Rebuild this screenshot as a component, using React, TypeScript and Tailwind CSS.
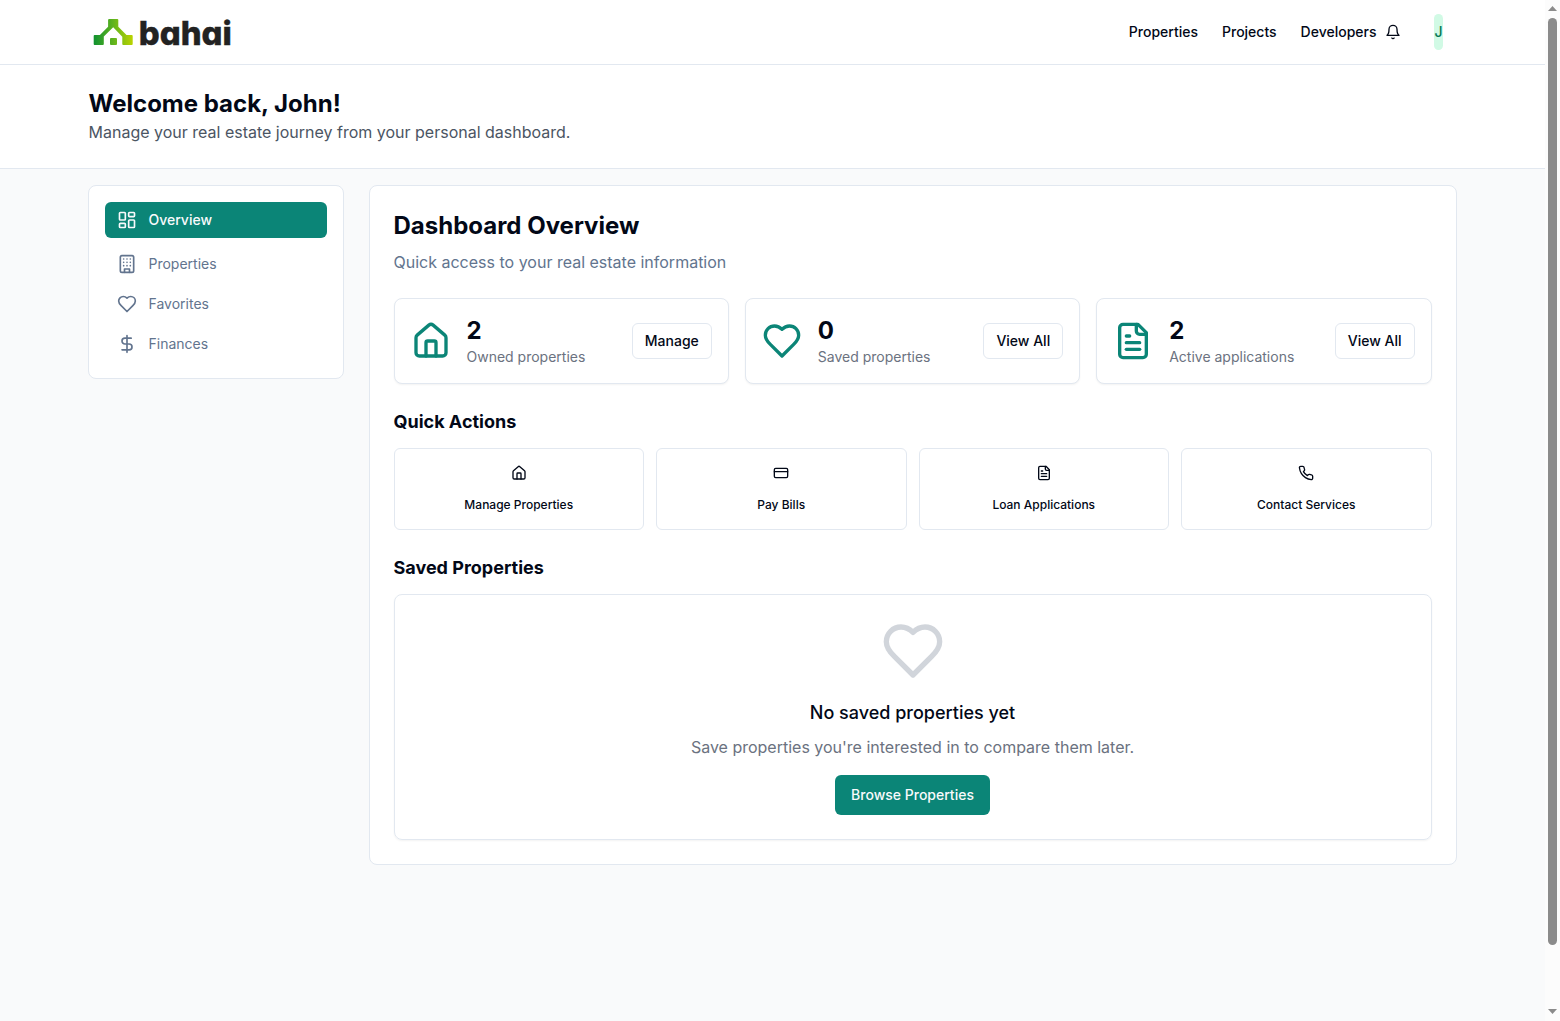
import type { ReactNode } from "react";

function Icon({ className, children }: { className: string; children: ReactNode }) {
  return (
    <svg
      viewBox="0 0 24 24"
      fill="none"
      stroke="currentColor"
      strokeWidth="2"
      strokeLinecap="round"
      strokeLinejoin="round"
      className={className}
    >
      {children}
    </svg>
  );
}

const house = (
  <>
    <path d="M15 21v-8a1 1 0 0 0-1-1h-4a1 1 0 0 0-1 1v8" />
    <path d="M3 10a2 2 0 0 1 .709-1.528l7-5.999a2 2 0 0 1 2.582 0l7 5.999A2 2 0 0 1 21 10v9a2 2 0 0 1-2 2H5a2 2 0 0 1-2-2z" />
  </>
);
const heart = (
  <path d="M19 14c1.49-1.46 3-3.21 3-5.5A5.5 5.5 0 0 0 16.5 3c-1.76 0-3 .5-4.5 2-1.5-1.5-2.74-2-4.5-2A5.5 5.5 0 0 0 2 8.5c0 2.3 1.5 4.05 3 5.5l7 7Z" />
);
const fileText = (
  <>
    <path d="M15 2H6a2 2 0 0 0-2 2v16a2 2 0 0 0 2 2h12a2 2 0 0 0 2-2V7Z" />
    <path d="M14 2v4a2 2 0 0 0 2 2h4" />
    <path d="M10 9H8" />
    <path d="M16 13H8" />
    <path d="M16 17H8" />
  </>
);
const creditCard = (
  <>
    <rect width="20" height="14" x="2" y="5" rx="2" />
    <path d="M2 10h20" />
  </>
);
const phone = (
  <path d="M22 16.92v3a2 2 0 0 1-2.18 2 19.79 19.79 0 0 1-8.63-3.07 19.5 19.5 0 0 1-6-6 19.79 19.79 0 0 1-3.07-8.67A2 2 0 0 1 4.11 2h3a2 2 0 0 1 2 1.72 12.84 12.84 0 0 0 .7 2.81 2 2 0 0 1-.45 2.11L8.09 9.91a16 16 0 0 0 6 6l1.27-1.27a2 2 0 0 1 2.11-.45 12.84 12.84 0 0 0 2.81.7A2 2 0 0 1 22 16.92z" />
);
const dashboard = (
  <>
    <rect width="7" height="9" x="3" y="3" rx="1" />
    <rect width="7" height="5" x="14" y="3" rx="1" />
    <rect width="7" height="9" x="14" y="12" rx="1" />
    <rect width="7" height="5" x="3" y="16" rx="1" />
  </>
);
const building = (
  <>
    <rect width="16" height="20" x="4" y="2" rx="2" />
    <path d="M9 22v-4h6v4" />
    <path d="M8 6h.01M16 6h.01M12 6h.01M12 10h.01M12 14h.01M16 10h.01M16 14h.01M8 10h.01M8 14h.01" />
  </>
);
const dollar = (
  <>
    <path d="M12 2v20" />
    <path d="M17 5H9.5a3.5 3.5 0 0 0 0 7h5a3.5 3.5 0 0 1 0 7H6" />
  </>
);
const bell = (
  <>
    <path d="M6 8a6 6 0 0 1 12 0c0 7 3 9 3 9H3s3-2 3-9" />
    <path d="M10.3 21a1.94 1.94 0 0 0 3.4 0" />
  </>
);

function Logo() {
  return (
    <div className="flex h-16 items-center pl-1">
      <svg width="42" height="32" viewBox="0 0 42 32" className="shrink-0">
        <defs>
          <linearGradient id="brand" gradientUnits="userSpaceOnUse" x1="1" y1="0" x2="40" y2="0">
            <stop offset="0" stopColor="#0f9130" />
            <stop offset="0.5" stopColor="#5fb31e" />
            <stop offset="1" stopColor="#b9d300" />
          </linearGradient>
        </defs>
        <g fill="url(#brand)" transform="translate(-0.5 0)">
          <path d="M16.6 3h8.2a1 1 0 0 1 1 1v6.800l8.200 8.200h5.300a.9.9 0 0 1 .9.9v8.200a.9.9 0 0 1-.9.9h-8.600a.9.9 0 0 1-.9-.9v-7.300L20.700 11.300 11.300 20.600v7.500a.9.9 0 0 1-.9.9H2.100a.9.9 0 0 1-.9-.9v-8.200a.9.9 0 0 1 .9-.9h5.300l8.200-8.200V4a1 1 0 0 1 1-1z" />
          <rect x="17.500" y="22" width="7" height="7" rx="1" />
        </g>
      </svg>
      <svg width="100" height="44" viewBox="0 0 100 44" className="shrink-0">
        <text
          x="3.800"
          y="34.500"
          fontSize="33"
          fontWeight="800"
          textLength="93"
          lengthAdjust="spacingAndGlyphs"
          fill="#222222"
          stroke="#222222"
          strokeWidth="0.4"
          className="[font-feature-settings:'cv11']"
        >
          bahai
        </text>
      </svg>
    </div>
  );
}

const stats = [
  { icon: house, value: "2", label: "Owned properties", action: "Manage" },
  { icon: heart, value: "0", label: "Saved properties", action: "View All" },
  { icon: fileText, value: "2", label: "Active applications", action: "View All" },
];
const actions = [
  { icon: house, label: "Manage Properties" },
  { icon: creditCard, label: "Pay Bills" },
  { icon: fileText, label: "Loan Applications" },
  { icon: phone, label: "Contact Services" },
];
const links = [
  { icon: building, label: "Properties" },
  { icon: heart, label: "Favorites" },
  { icon: dollar, label: "Finances" },
];

export default function App() {
  return (
    <div className="flex h-[1021px] overflow-hidden bg-[#f9fafb] font-['Inter',sans-serif] text-[#020817]">
      <div className="w-[1545px] shrink-0">
        <header className="h-[65px] border-b border-slate-200 bg-white">
          <div className="mx-auto flex h-16 w-[1400px] items-center justify-between px-4">
            <Logo />
            <div className="flex items-center pr-[13.5px] text-sm leading-5 font-medium">
              <nav className="flex gap-6">
                <a>Properties</a>
                <a>Projects</a>
                <a>Developers</a>
              </nav>
              <Icon className="ml-[8.5px] size-4">{bell}</Icon>
              <span className="ml-[33px] flex h-9 w-[9px] items-center justify-center rounded-md bg-[#d1fae5] text-[#047857]">
                J
              </span>
            </div>
          </div>
        </header>

        <section className="h-[104px] border-b border-slate-200 bg-white">
          <div className="mx-auto w-[1400px] px-4 pt-[23px]">
            <h1 className="text-2xl leading-8 font-bold">Welcome back, John!</h1>
            <p className="text-[#4b5563]">Manage your real estate journey from your personal dashboard.</p>
          </div>
        </section>

        <div className="mx-auto flex w-[1400px] items-start px-4 pt-4">
          <aside className="-ml-[0.5px] mr-[24.5px] w-64 shrink-0 rounded-lg border border-slate-200 bg-white p-4">
            <a className="mb-2 flex h-9 items-center rounded-md bg-[#0b8577] px-3 text-sm leading-5 font-medium text-slate-50">
              <Icon className="mr-[11.5px] size-5">{dashboard}</Icon>
              Overview
            </a>
            <nav className="flex flex-col gap-1">
              {links.map((l) => (
                <a key={l.label} className="flex h-9 items-center px-3 text-sm leading-5 text-slate-500">
                  <Icon className="mr-[11.5px] size-5">{l.icon}</Icon>
                  {l.label}
                </a>
              ))}
            </nav>
          </aside>

          <main className="flex-1 rounded-lg border border-slate-200 bg-white p-6">
            <h2 className="text-2xl leading-8 font-bold">Dashboard Overview</h2>
            <p className="mt-2 text-slate-500">Quick access to your real estate information</p>

            <div className="mt-6 grid grid-cols-3 gap-4">
              {stats.map((s) => (
                <div
                  key={s.label}
                  className="flex items-center rounded-lg border border-slate-200 bg-white p-4 shadow-[0_1px_2px_0_rgba(0,0,0,0.05)]"
                >
                  <Icon className="mr-4 size-10 text-[#0b8577]">{s.icon}</Icon>
                  <div>
                    <div className="text-2xl leading-8 font-bold">{s.value}</div>
                    <div className="text-sm leading-5 text-[#6b7280]">{s.label}</div>
                  </div>
                  <button className="ml-auto h-9 rounded-md border border-slate-200 px-3 text-sm leading-5 font-medium">
                    {s.action}
                  </button>
                </div>
              ))}
            </div>

            <h3 className="mt-6 text-lg leading-7 font-bold">Quick Actions</h3>
            <div className="mt-3 grid grid-cols-4 gap-3">
              {actions.map((a) => (
                <button
                  key={a.label}
                  className="flex flex-col items-center gap-4 rounded-md border border-slate-200 p-4 text-xs leading-4 font-medium"
                >
                  <Icon className="size-4">{a.icon}</Icon>
                  {a.label}
                </button>
              ))}
            </div>

            <h3 className="mt-6 text-lg leading-7 font-bold">Saved Properties</h3>
            <div className="mt-3 flex flex-col items-center rounded-lg border border-slate-200 p-6 shadow-[0_1px_2px_0_rgba(0,0,0,0.05)]">
              <Icon className="size-16 text-[#d1d5db]">{heart}</Icon>
              <h4 className="mt-4 text-lg leading-7 font-medium">No saved properties yet</h4>
              <p className="mt-2 text-[#6b7280]">Save properties you're interested in to compare them later.</p>
              <button className="mt-4 h-10 rounded-md bg-[#0b8577] px-4 text-sm leading-5 font-medium text-slate-50">
                Browse Properties
              </button>
            </div>
          </main>
        </div>
      </div>

      <div className="flex w-[15px] shrink-0 flex-col items-center bg-[#fcfcfc]">
        <svg width="9" height="5" viewBox="0 0 9 5" className="mt-1.5 shrink-0" fill="#8b8b8b">
          <path d="M4.500 0 9 5H0z" />
        </svg>
        <div className="mt-[7px] h-[927px] w-[9px] shrink-0 rounded-full bg-[#8b8b8b]" />
        <svg width="9" height="5" viewBox="0 0 9 5" className="mt-16 shrink-0" fill="#8b8b8b">
          <path d="M0 0h9L4.500 5z" />
        </svg>
      </div>
    </div>
  );
}
